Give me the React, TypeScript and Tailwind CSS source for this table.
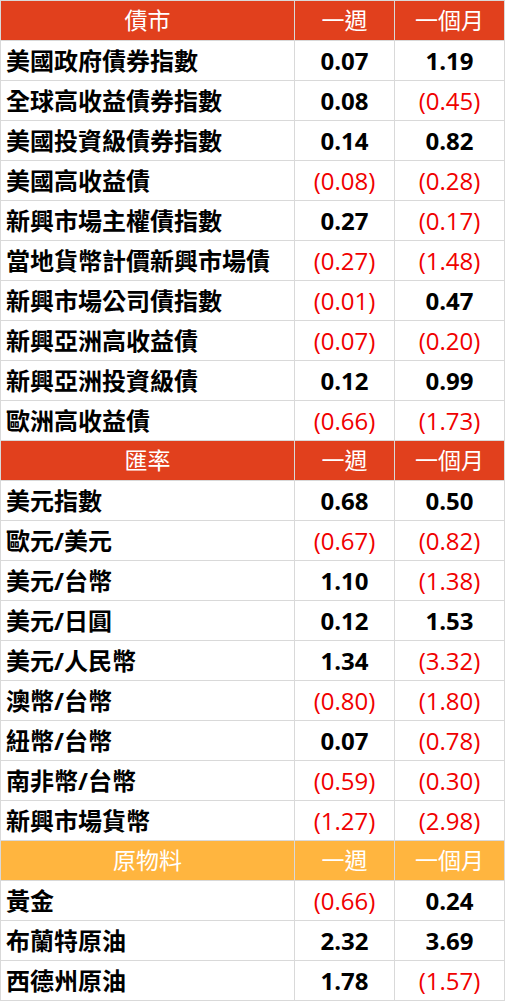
type Row = [string, string, string]

interface Section {
  title: string
  head: string
  rows: Row[]
}

const sections: Section[] = [
  {
    title: '債市',
    head: 'bg-[#e1401d]',
    rows: [
      ['美國政府債券指數', '0.07', '1.19'],
      ['全球高收益債券指數', '0.08', '(0.45)'],
      ['美國投資級債券指數', '0.14', '0.82'],
      ['美國高收益債', '(0.08)', '(0.28)'],
      ['新興市場主權債指數', '0.27', '(0.17)'],
      ['當地貨幣計價新興市場債', '(0.27)', '(1.48)'],
      ['新興市場公司債指數', '(0.01)', '0.47'],
      ['新興亞洲高收益債', '(0.07)', '(0.20)'],
      ['新興亞洲投資級債', '0.12', '0.99'],
      ['歐洲高收益債', '(0.66)', '(1.73)'],
    ],
  },
  {
    title: '匯率',
    head: 'bg-[#e1401d]',
    rows: [
      ['美元指數', '0.68', '0.50'],
      ['歐元/美元', '(0.67)', '(0.82)'],
      ['美元/台幣', '1.10', '(1.38)'],
      ['美元/日圓', '0.12', '1.53'],
      ['美元/人民幣', '1.34', '(3.32)'],
      ['澳幣/台幣', '(0.80)', '(1.80)'],
      ['紐幣/台幣', '0.07', '(0.78)'],
      ['南非幣/台幣', '(0.59)', '(0.30)'],
      ['新興市場貨幣', '(1.27)', '(2.98)'],
    ],
  },
  {
    title: '原物料',
    head: 'bg-[#ffb53f]',
    rows: [
      ['黃金', '(0.66)', '0.24'],
      ['布蘭特原油', '2.32', '3.69'],
      ['西德州原油', '1.78', '(1.57)'],
    ],
  },
]

function Value({ v }: { v: string }) {
  const neg = v.startsWith('(')
  return (
    <span className={neg ? 'font-normal text-[#f00000]' : 'font-bold text-black'}>{v}</span>
  )
}

export default function App() {
  return (
    <div
      className="w-[505px] border-l border-t border-[#d9d9d9] bg-white text-[24px] leading-none"
      style={{ fontFamily: '"Open Sans", "Noto Sans CJK TC", sans-serif' }}
    >
      {sections.map((sec) => (
        <div key={sec.title}>
          <div className={`flex h-[40px] border-b border-[#d9d9d9] text-[23px] text-white ${sec.head}`}>
            <div className="flex w-[294px] items-center justify-center border-r border-[#d9d9d9]">{sec.title}</div>
            <div className="flex w-[100px] items-center justify-center border-r border-[#d9d9d9]">一週</div>
            <div className="flex w-[110px] items-center justify-center border-r border-[#d9d9d9]">一個月</div>
          </div>
          {sec.rows.map(([name, week, month]) => (
            <div key={name} className="flex h-[40px] border-b border-[#d9d9d9]">
              <div className="flex w-[294px] items-center border-r border-[#d9d9d9] pl-[5px] font-bold text-black">
                {name}
              </div>
              <div className="flex w-[100px] items-center justify-center border-r border-[#d9d9d9]">
                <Value v={week} />
              </div>
              <div className="flex w-[110px] items-center justify-center border-r border-[#d9d9d9]">
                <Value v={month} />
              </div>
            </div>
          ))}
        </div>
      ))}
    </div>
  )
}
